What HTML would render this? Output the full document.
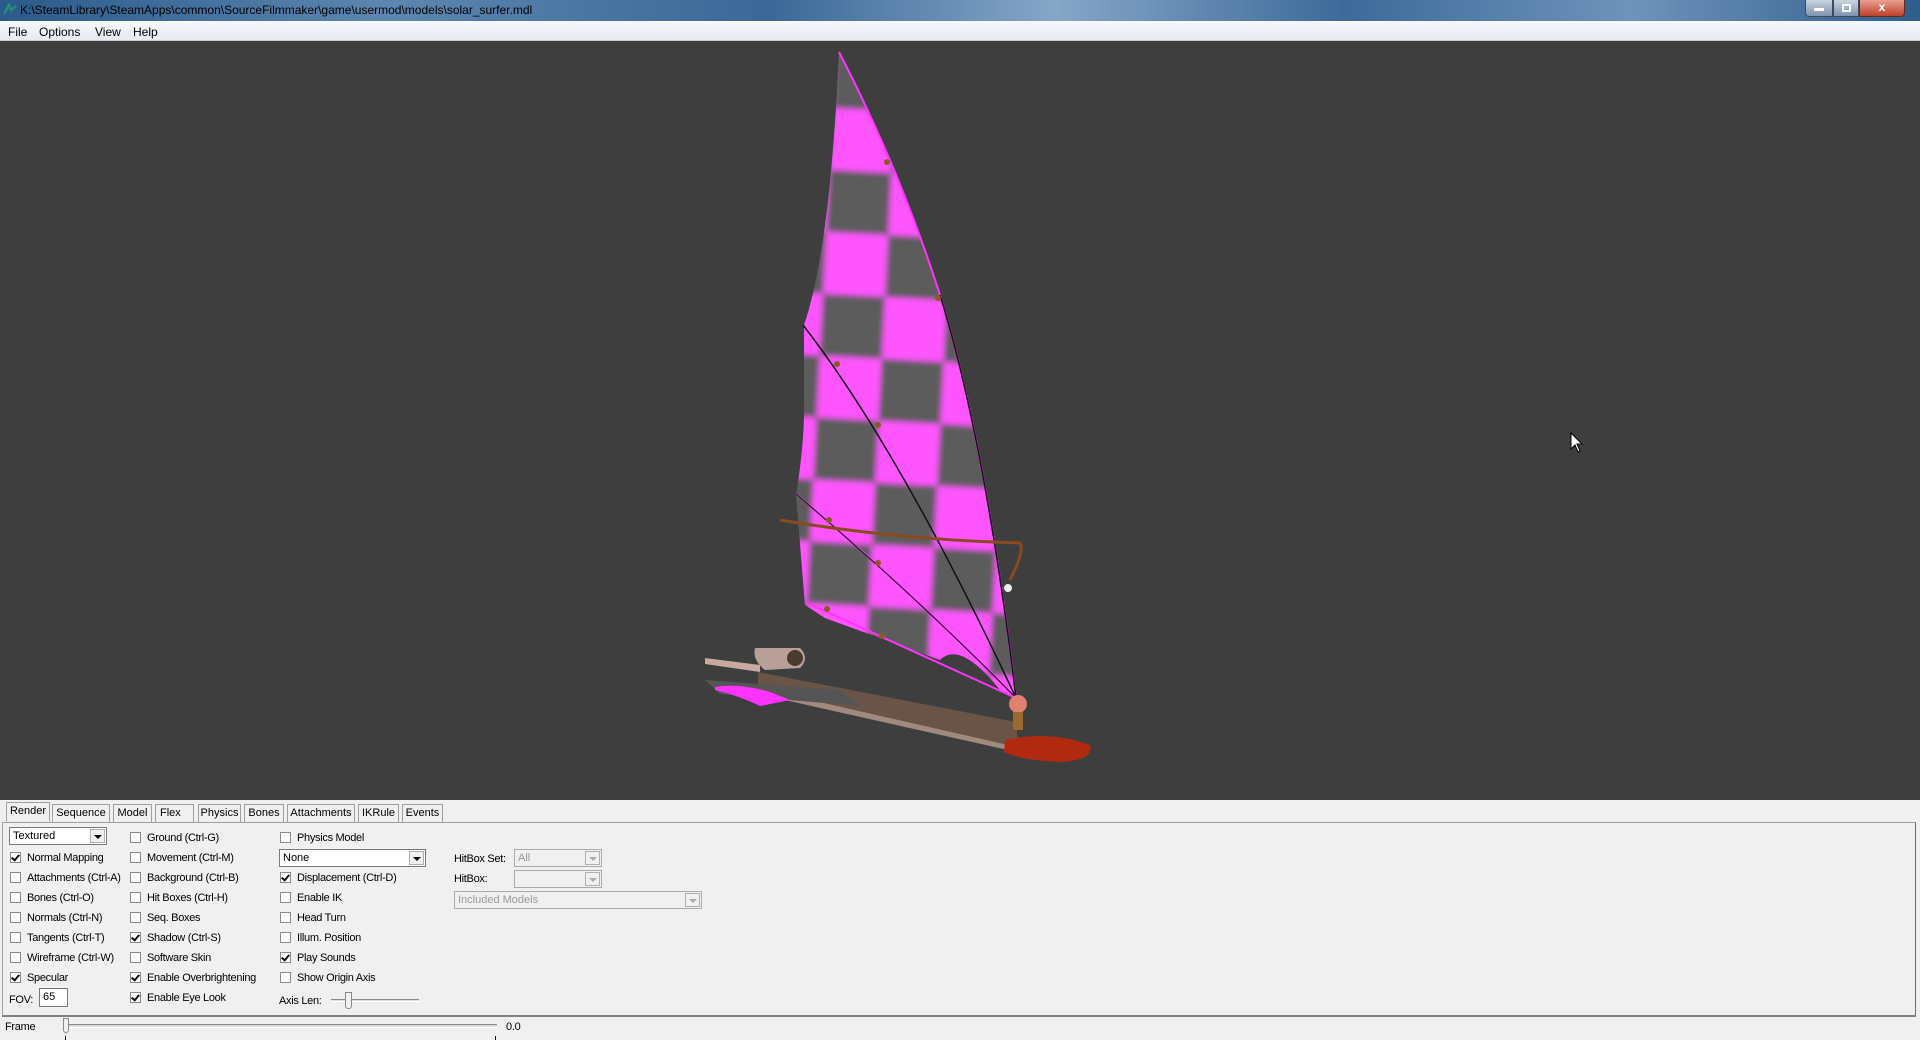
<!DOCTYPE html>
<html><head><meta charset="utf-8"><style>
*{margin:0;padding:0;box-sizing:border-box}
body{width:1920px;height:1040px;overflow:hidden;background:#f0f0f0;font-family:"Liberation Sans",sans-serif;font-size:11px;color:#000;position:relative}
.abs{position:absolute}
#title{left:0;top:0;width:1920px;height:21px;background:linear-gradient(90deg,#2a5a8a 0%,#5d86b0 20%,#3b6898 40%,#86a6c8 55%,#3d6a9a 70%,#6f93bb 85%,#2f5d8c 100%);color:#000;font-size:12px;line-height:21px;padding-left:20px}
#menu{left:0;top:21px;width:1920px;height:20px;background:linear-gradient(#f7f8fc,#e6eaf3);border-bottom:1px solid #c8cdd8;font-size:12px;line-height:22px}
#menu span{position:absolute;top:0}
#view{left:0;top:41px;width:1920px;height:759px;background:#3e3e3e}
.tab{position:absolute;top:804px;height:18px;border:1px solid #a0a0a0;border-bottom:none;background:#f0f0f0;line-height:16px;text-align:center;font-size:11px}
#panel{left:2px;top:822px;width:1914px;height:195px;border:1px solid #a0a0a0;border-right-color:#707070;border-bottom:2px solid #808080;background:#f0f0f0}
.cb{position:absolute;width:11px;height:11px;border:1px solid #8a8a8a;background:#fff}
.cb.on::after{content:"";position:absolute;left:2px;top:0px;width:3px;height:6px;border:solid #111;border-width:0 2px 2px 0;transform:rotate(40deg)}
.lb{position:absolute;font-size:11px;white-space:nowrap;letter-spacing:-0.3px}
.combo{position:absolute;height:18px;border:1px solid #7a7a7a;background:#fff;font-size:11px;line-height:16px;padding-left:3px}
.combo .ar{position:absolute;right:1px;top:1px;width:15px;height:14px;background:#f0f0f0;border:1px solid #b0b0b0}
.combo .ar::after{content:"";position:absolute;left:3px;top:5px;border:4px solid transparent;border-top:4px solid #000;border-bottom:none}
.combo.dis{background:#f0f0f0;color:#999;border-color:#aaa}
.combo.dis .ar::after{border-top-color:#aaa}
</style></head><body>
<div id="title" class="abs">K:\SteamLibrary\SteamApps\common\SourceFilmmaker\game\usermod\models\solar_surfer.mdl</div>
<svg class="abs" style="left:2px;top:2px" width="16" height="16"><path d="M2 12 L7 3 L9 8 L14 4" stroke="#2a8a7a" stroke-width="2.5" fill="none"/></svg>
<div class="abs" style="left:1805px;top:0;width:28px;height:17px;background:linear-gradient(#c8d4e2,#7e93ad);border:1px solid #3c4a5c;border-top:none;border-radius:0 0 0 4px"><div style="margin:8px auto 0;width:10px;height:3px;background:#fff"></div></div>
<div class="abs" style="left:1833px;top:0;width:26px;height:17px;background:linear-gradient(#c8d4e2,#7e93ad);border:1px solid #3c4a5c;border-top:none"><div style="margin:4px auto 0;width:9px;height:8px;border:2px solid #fff"></div></div>
<div class="abs" style="left:1859px;top:0;width:46px;height:17px;background:linear-gradient(#e8a090,#c0402a);border:1px solid #5c2a20;border-top:none;border-radius:0 0 4px 0;color:#fff;font-weight:bold;text-align:center;font-size:12px;line-height:15px">x</div>
<div id="menu" class="abs"><span style="left:8px">File</span><span style="left:39px">Options</span><span style="left:95px">View</span><span style="left:133px">Help</span></div>
<div id="view" class="abs"></div>
<svg class="abs" style="left:0;top:41px" width="1920" height="759" viewBox="0 41 1920 759">
<defs>
<pattern id="ck" x="0" y="0" width="124" height="124" patternUnits="userSpaceOnUse" patternTransform="translate(836,46) rotate(3)">
<rect width="124" height="124" fill="#ff55ff"/><rect x="0" y="0" width="62" height="62" fill="#5c5c5c"/><rect x="62" y="62" width="62" height="62" fill="#5c5c5c"/>
</pattern>
<filter id="bl"><feGaussianBlur stdDeviation="3"/></filter>
<clipPath id="sc"><path d="M839 52 Q900 170 940 295 Q985 440 1016 698 L1000 690 Q960 640 940 660 L825 618 L805 605 L796 495 Q805 440 804 400 L804 325 Q830 250 839 52 Z"/></clipPath>
</defs>
<g clip-path="url(#sc)"><rect x="700" y="0" width="400" height="760" fill="url(#ck)" filter="url(#bl)"/></g>
<path d="M839 52 Q900 170 940 295 Q985 440 1016 698" stroke="#ff33ff" stroke-width="2" fill="none"/>
<path d="M940 295 Q985 440 1016 698" stroke="#111" stroke-width="1.5" fill="none"/>
<path d="M803 325 Q900 450 1016 698" stroke="#111" stroke-width="1.5" fill="none"/>
<path d="M796 494 Q900 580 1016 698" stroke="#ff33ff" stroke-width="1.5" fill="none"/>
<path d="M796 494 Q920 600 1016 698" stroke="#111" stroke-width="1" fill="none"/>
<path d="M805 602 L1016 698" stroke="#ff33ff" stroke-width="2" fill="none"/>
<path d="M780 520 Q900 540 1020 543 Q1025 550 1010 580" stroke="#8a4a20" stroke-width="3" fill="none"/>
<circle cx="1008" cy="588" r="4" fill="#eee"/>
<g fill="#8a5a20"><circle cx="887" cy="162" r="3"/><circle cx="938" cy="298" r="3"/><circle cx="837" cy="364" r="3"/><circle cx="878" cy="425" r="3"/><circle cx="829" cy="520" r="3"/><circle cx="878" cy="563" r="3"/><circle cx="827" cy="609" r="3"/><circle cx="882" cy="636" r="3"/></g>
<polygon points="758,672 1016,722 1018,742 1008,749 758,692" fill="#6a5448"/>
<polygon points="758,688 1008,745 1008,750 758,694" fill="#a08a80"/>
<polygon points="705,680 840,690 860,706 720,694" fill="#555"/>
<path d="M715 687 Q740 683 770 692 L790 700 L760 706 Q740 696 715 690 Z" fill="#ff33ff"/>
<path d="M705 658 L760 665 L760 672 L705 664 Z" fill="#c8aaa0"/>
<path d="M755 648 L800 648 Q810 658 800 668 L765 670 Q752 660 755 648 Z" fill="#b8a098"/>
<circle cx="795" cy="658" r="8" fill="#4a3a30"/>
<path d="M1005 740 Q1050 730 1090 745 Q1095 760 1060 762 Q1020 760 1004 752 Z" fill="#b02a10"/>
<circle cx="1018" cy="704" r="9" fill="#e08070"/>
<rect x="1013" y="712" width="10" height="18" fill="#9a6a30"/>
<path d="M1571 433 L1571 449 L1575 445 L1578 452 L1580 451 L1577 444 L1582 444 Z" fill="#fff" stroke="#000" stroke-width="1"/>
</svg>
<div class="tab" style="left:6px;width:44px;top:802px;height:20px;z-index:2;border-bottom:1px solid #f0f0f0">Render</div>
<div class="tab" style="left:52px;width:58px">Sequence</div>
<div class="tab" style="left:113px;width:39px">Model</div>
<div class="tab" style="left:155px;width:39px;text-align:left;padding-left:4px">Flex</div>
<div class="tab" style="left:198px;width:43px">Physics</div>
<div class="tab" style="left:244px;width:40px">Bones</div>
<div class="tab" style="left:287px;width:68px">Attachments</div>
<div class="tab" style="left:358px;width:41px">IKRule</div>
<div class="tab" style="left:402px;width:41px">Events</div>
<div id="panel" class="abs"></div>
<div class="combo" style="left:9px;top:827px;width:98px">Textured<div class="ar"></div></div>
<div class="combo" style="left:279px;top:849px;width:147px">None<div class="ar"></div></div>
<div class="lb" style="left:454px;top:853px">HitBox Set:</div>
<div class="combo dis" style="left:514px;top:849px;width:88px">All<div class="ar"></div></div>
<div class="lb" style="left:454px;top:873px">HitBox:</div>
<div class="combo dis" style="left:514px;top:870px;width:88px"><div class="ar"></div></div>
<div class="combo dis" style="left:454px;top:891px;width:248px">Included Models<div class="ar"></div></div>

<div class="cb on" style="left:10px;top:852px"></div><div class="lb" style="left:27px;top:852px">Normal Mapping</div>
<div class="cb" style="left:10px;top:872px"></div><div class="lb" style="left:27px;top:872px">Attachments (Ctrl-A)</div>
<div class="cb" style="left:10px;top:892px"></div><div class="lb" style="left:27px;top:892px">Bones (Ctrl-O)</div>
<div class="cb" style="left:10px;top:912px"></div><div class="lb" style="left:27px;top:912px">Normals (Ctrl-N)</div>
<div class="cb" style="left:10px;top:932px"></div><div class="lb" style="left:27px;top:932px">Tangents (Ctrl-T)</div>
<div class="cb" style="left:10px;top:952px"></div><div class="lb" style="left:27px;top:952px">Wireframe (Ctrl-W)</div>
<div class="cb on" style="left:10px;top:972px"></div><div class="lb" style="left:27px;top:972px">Specular</div>
<div class="lb" style="left:9px;top:994px">FOV:</div>
<div class="abs" style="left:39px;top:988px;width:29px;height:19px;background:#fff;border:1px solid #7a7a7a;font-size:11px;padding:2px 3px">65</div>

<div class="cb" style="left:130px;top:832px"></div><div class="lb" style="left:147px;top:832px">Ground (Ctrl-G)</div>
<div class="cb" style="left:130px;top:852px"></div><div class="lb" style="left:147px;top:852px">Movement (Ctrl-M)</div>
<div class="cb" style="left:130px;top:872px"></div><div class="lb" style="left:147px;top:872px">Background (Ctrl-B)</div>
<div class="cb" style="left:130px;top:892px"></div><div class="lb" style="left:147px;top:892px">Hit Boxes (Ctrl-H)</div>
<div class="cb" style="left:130px;top:912px"></div><div class="lb" style="left:147px;top:912px">Seq. Boxes</div>
<div class="cb on" style="left:130px;top:932px"></div><div class="lb" style="left:147px;top:932px">Shadow (Ctrl-S)</div>
<div class="cb" style="left:130px;top:952px"></div><div class="lb" style="left:147px;top:952px">Software Skin</div>
<div class="cb on" style="left:130px;top:972px"></div><div class="lb" style="left:147px;top:972px">Enable Overbrightening</div>
<div class="cb on" style="left:130px;top:992px"></div><div class="lb" style="left:147px;top:992px">Enable Eye Look</div>

<div class="cb" style="left:280px;top:832px"></div><div class="lb" style="left:297px;top:832px">Physics Model</div>
<div class="cb on" style="left:280px;top:872px"></div><div class="lb" style="left:297px;top:872px">Displacement (Ctrl-D)</div>
<div class="cb" style="left:280px;top:892px"></div><div class="lb" style="left:297px;top:892px">Enable IK</div>
<div class="cb" style="left:280px;top:912px"></div><div class="lb" style="left:297px;top:912px">Head Turn</div>
<div class="cb" style="left:280px;top:932px"></div><div class="lb" style="left:297px;top:932px">Illum. Position</div>
<div class="cb on" style="left:280px;top:952px"></div><div class="lb" style="left:297px;top:952px">Play Sounds</div>
<div class="cb" style="left:280px;top:972px"></div><div class="lb" style="left:297px;top:972px">Show Origin Axis</div>
<div class="lb" style="left:279px;top:995px">Axis Len:</div>
<div class="abs" style="left:331px;top:999px;width:88px;height:3px;border-top:1px solid #888;border-bottom:1px solid #fff;background:#ddd"></div>
<div class="abs" style="left:345px;top:992px;width:7px;height:17px;background:#f0f0f0;border:1px solid #888;border-radius:0 0 3px 3px"></div>

<div class="lb" style="left:5px;top:1021px">Frame</div>
<div class="abs" style="left:67px;top:1024px;width:430px;height:4px;border-top:1px solid #888;border-bottom:1px solid #fff;background:#ddd"></div>
<div class="abs" style="left:63px;top:1018px;width:6px;height:15px;background:#f0f0f0;border:1px solid #888;border-radius:0 0 3px 3px"></div>
<div class="abs" style="left:65px;top:1036px;width:1px;height:4px;background:#000"></div>
<div class="abs" style="left:495px;top:1036px;width:1px;height:4px;background:#000"></div>
<div class="lb" style="left:506px;top:1021px">0.0</div>
</body></html>
